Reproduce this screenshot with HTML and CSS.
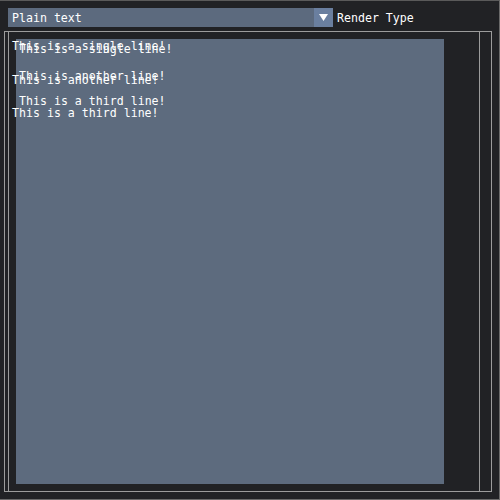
FILE: index.html
```html
<!DOCTYPE html>
<html>
<head>
<meta charset="utf-8">
<link rel="stylesheet" href="styles.css">
</head>
<body>
<div class="window">
  <div class="toolbar">
    <div class="combo">
      <span class="combo-text">Plain text</span>
      <span class="combo-btn"><svg width="9" height="7" viewBox="0 0 9 7"><path d="M0 0H9L4.5 7Z" fill="#fff"/></svg></span>
    </div>
    <span class="label">Render Type</span>
  </div>
  <div class="frame">
    <div class="inner">
      <div class="canvas"></div>
    </div>
  </div>
  <div class="layer layer-a">
    <div class="ln a1">This is a single line!</div>
    <div class="ln a2">This is another line!</div>
    <div class="ln a3">This is a third line!</div>
  </div>
  <div class="layer layer-b">
    <div class="ln b1">This is a single line!</div>
    <div class="ln b2">This is another line!</div>
    <div class="ln b3">This is a third line!</div>
  </div>
</div>
</body>
</html>
```
FILE: styles.css
```css
html, body {
  margin: 0;
  padding: 0;
  background: #212225;
}
.window {
  position: relative;
  width: 500px;
  height: 500px;
  box-sizing: border-box;
  background: #212225;
  border-top: 1px solid #5a5a5a;
  border-right: 1px solid #6a6a6a;
  border-bottom: 1px solid #6a6a6a;
  font-family: "DejaVu Sans Mono", "Liberation Mono", monospace;
  font-size: 11.6px;
  line-height: 13px;
  color: #ffffff;
}
.toolbar {
  display: flex;
  align-items: center;
  padding: 7px 0 0 8px;
  height: 19px;
}
.combo {
  display: flex;
  width: 325px;
  height: 19px;
  background: #5c6a7e;
}
.combo-text {
  flex: 1;
  padding: 4px 0 0 4px;
}
.combo-btn {
  width: 19px;
  height: 19px;
  background: #6a7f9f;
  display: flex;
  align-items: center;
  justify-content: center;
}
.label {
  margin-left: 4px;
  padding-top: 2px;
}
.frame {
  margin: 4px 0 0 4px;
  width: 488px;
  height: 461px;
  box-sizing: border-box;
  border: 1px solid #9c9c9c;
  padding: 0 11px 0 3px;
}
.inner {
  height: 100%;
  box-sizing: border-box;
  border-left: 1px solid #9c9c9c;
  border-right: 1px solid #9c9c9c;
  padding: 7px 0 0 7px;
}
.canvas {
  width: 428px;
  height: 445px;
  background: #5d6b7e;
}
.layer {
  position: absolute;
}
.ln {
  white-space: pre;
}
.layer-a {
  left: 12px;
  top: 39px;
}
.layer-b {
  left: 19px;
  top: 42px;
}
.a2 { margin-top: 21px; }
.a3 { margin-top: 20px; }
.b2 { margin-top: 14px; }
.b3 { margin-top: 12px; }
```
